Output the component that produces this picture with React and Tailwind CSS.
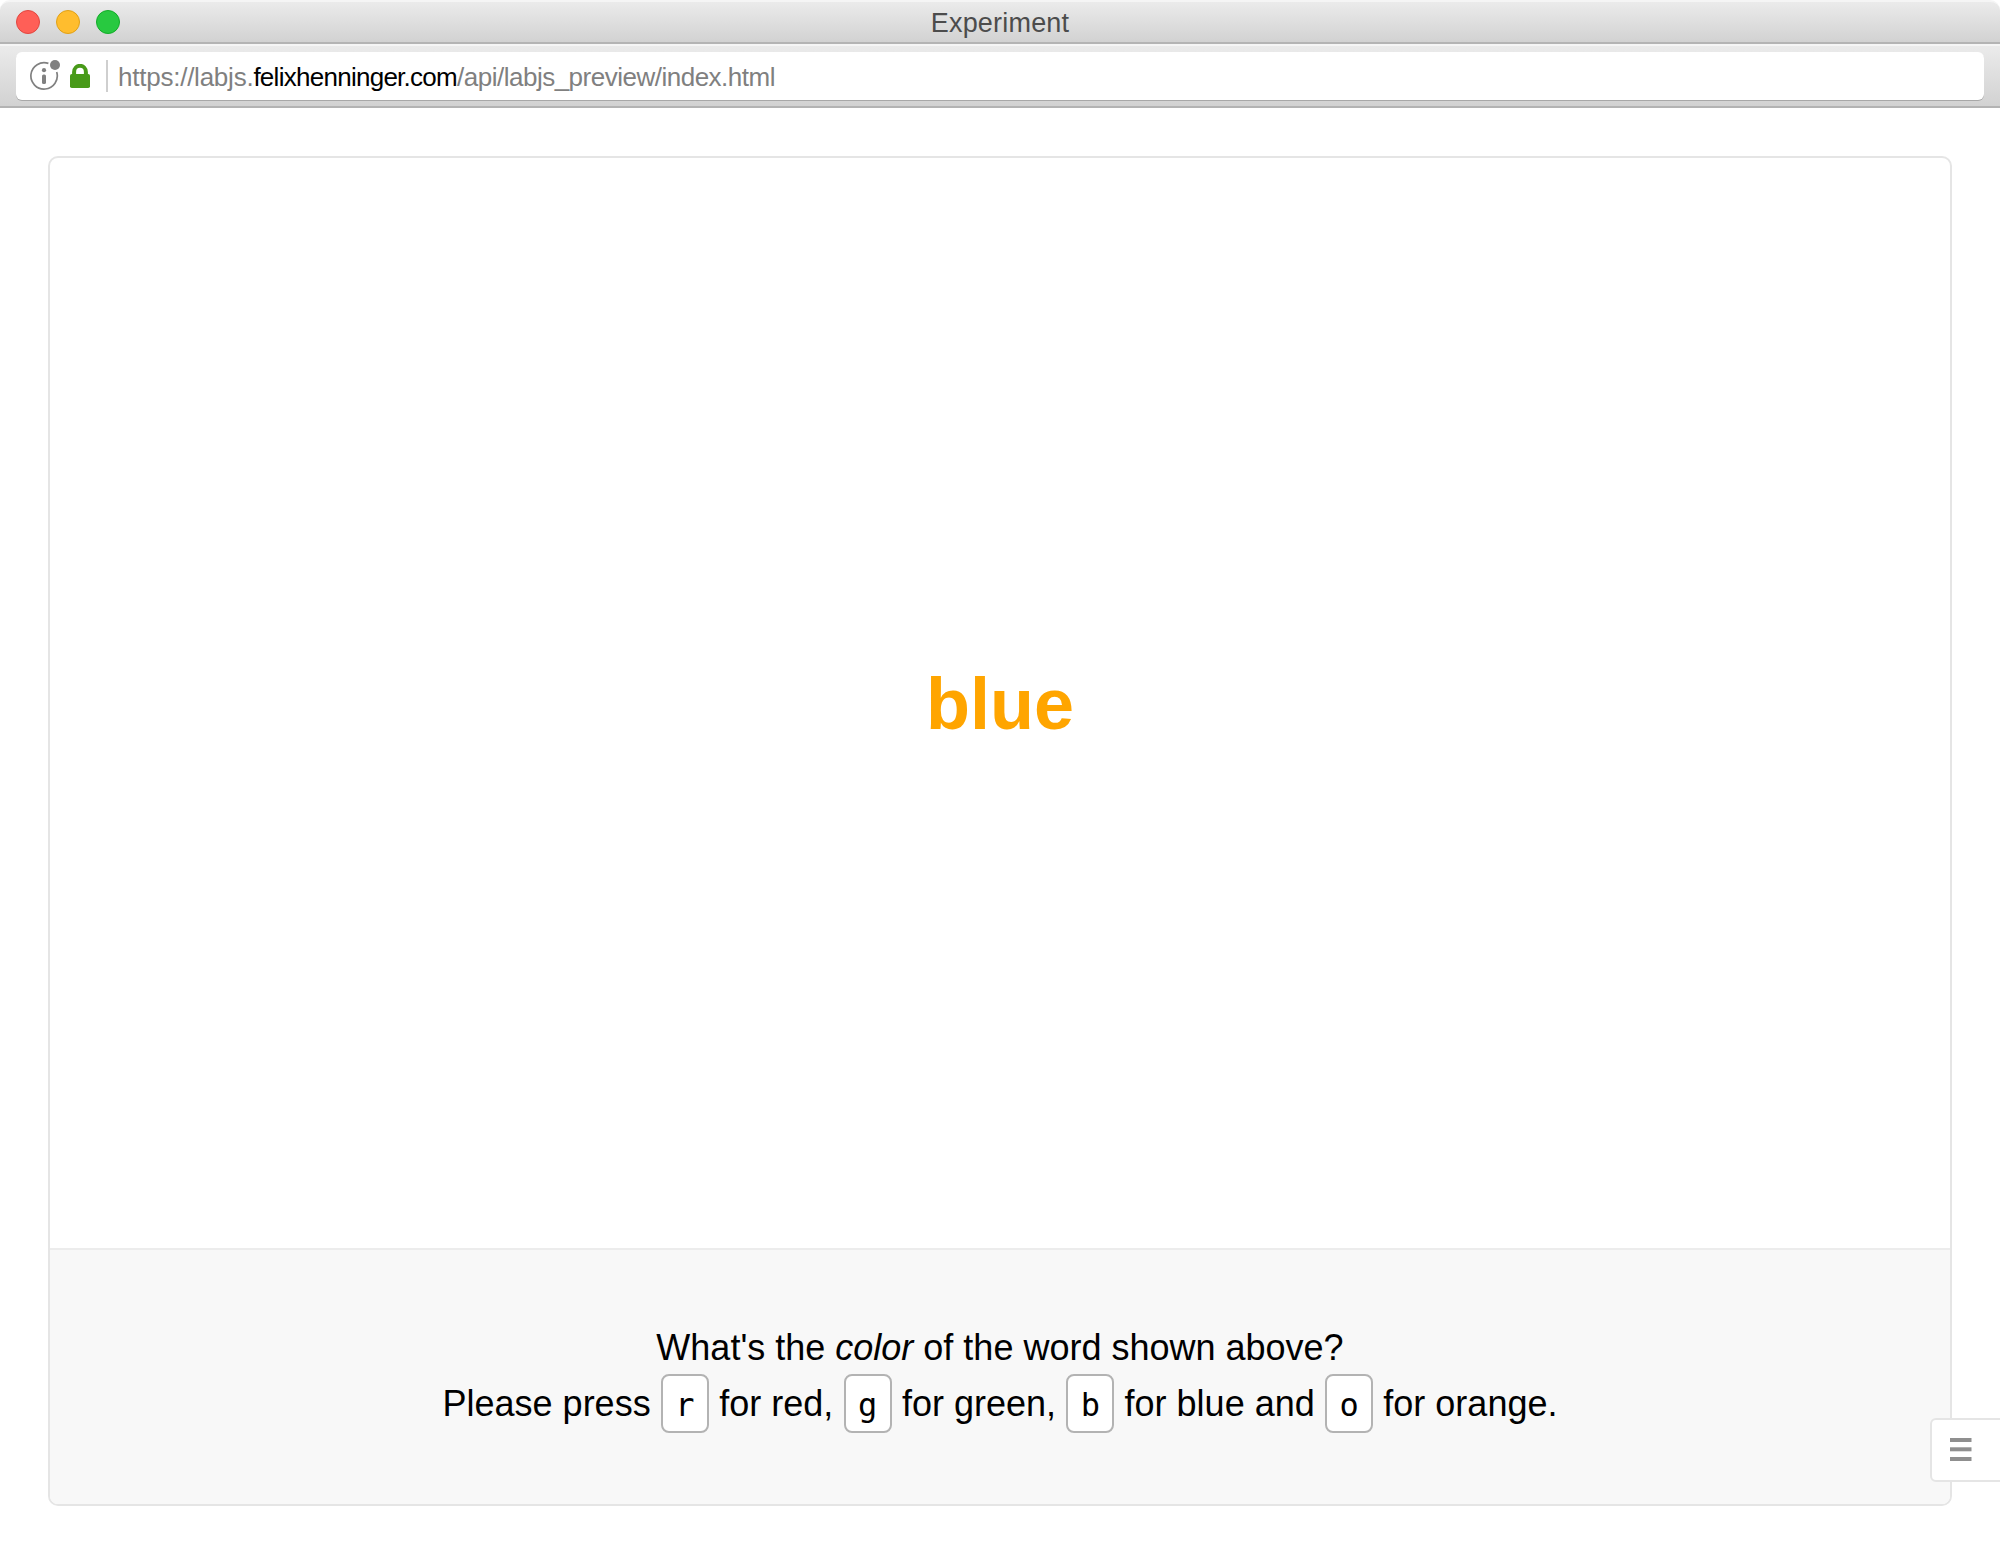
function Kbd({ children }) {
  return (
    <kbd className="mx-[0.3px] inline-block h-[59px] w-[48px] rounded-[8px] border-2 border-[#b3b3b3] bg-white text-center align-baseline font-['DejaVu_Sans_Mono',monospace] text-[32px] leading-[59px]">
      {children}
    </kbd>
  );
}

function TitleBar() {
  return (
    <div className="flex h-[44px] items-center rounded-t-[10px] border-t-2 border-b-2 border-t-[#f5f5f5] border-b-[#b4b4b4] bg-linear-to-b from-[#ebebeb] to-[#d2d2d2] px-4">
      <div className="flex flex-1 items-center gap-4">
        <span className="size-6 rounded-full border border-[#e2463f] bg-[#ff5f57]" />
        <span className="size-6 rounded-full border border-[#e1a116] bg-[#ffbd2e]" />
        <span className="size-6 rounded-full border border-[#12ac28] bg-[#28c940]" />
      </div>
      <h1 className="pt-[2px] text-[27px] leading-[38px] tracking-[0.2px] text-[#4c4c4c]">Experiment</h1>
      <div className="flex-1" />
    </div>
  );
}

function AddressBar() {
  return (
    <div className="h-[64px] border-t-2 border-b-2 border-t-[#f5f5f5] border-b-[#b3b3b3] bg-linear-to-b from-[#ebebeb] to-[#d2d2d2] px-4 pt-[6px]">
      <div className="flex h-[48px] items-center rounded-[6px] bg-white pl-[14px] shadow-[0_1px_0_#a8a8a8]">
        <svg className="h-[32px] w-[31px] shrink-0" viewBox="0 0 31 32" fill="none">
          <path d="M18.4 3.4A13.2 13.2 0 1 0 26.7 12" stroke="#808080" strokeWidth="1.7" />
          <circle cx="25" cy="5" r="5" fill="#808080" />
          <circle cx="14" cy="10.2" r="2.1" fill="#808080" />
          <rect x="12" y="14.6" width="4" height="9.4" rx="1.6" fill="#808080" />
        </svg>
        <svg className="ml-[9px] h-[24px] w-[20px] shrink-0" viewBox="0 0 20 24" fill="none">
          <path d="M4.1 11V8a5.9 6.2 0 0 1 11.8 0v3" stroke="#489a19" strokeWidth="4" />
          <rect y="10" width="20" height="14" rx="1.8" fill="#489a19" />
        </svg>
        <span className="ml-4 h-8 w-[2px] bg-[#cfcfcf]" />
        <span className="ml-[10px] pt-[2px] text-[26px] leading-[46px] whitespace-nowrap text-[#808080]">
          <span className="tracking-[-0.24px]">https://labjs.</span>
          <span className="tracking-[-0.73px] text-black">felixhenninger.com</span>
          <span className="tracking-[-0.5px]">/api/labjs_preview/index.html</span>
        </span>
      </div>
    </div>
  );
}

export default function App() {
  return (
    <div className="flex h-[1554px] w-[2000px] flex-col overflow-hidden bg-white font-['Liberation_Sans',Arial,sans-serif]">
      <TitleBar />
      <AddressBar />
      <div className="relative flex-1 px-12 pt-12 pb-[48px]">
        <main className="flex h-full flex-col overflow-hidden rounded-[10px] border-2 border-[#e5e5e5]">
          <section className="flex flex-1 items-center justify-center pt-px">
            <h2 className="text-[72px] leading-[84px] font-bold text-[#ffa500]">blue</h2>
          </section>
          <footer className="flex h-[256px] flex-col items-center justify-center border-t-2 border-[#ececec] bg-[#f8f8f8] pb-[2px] text-[36px] leading-[56px] whitespace-nowrap text-black">
            <p className="h-[56px]">
              What's the <em>color</em> of the word shown above?
            </p>
            <p className="-mt-[2px] mb-[2px] h-[56px]">
              Please press <Kbd>r</Kbd> for red, <Kbd>g</Kbd> for green, <Kbd>b</Kbd> for blue and <Kbd>o</Kbd> for orange.
            </p>
          </footer>
        </main>
        <button aria-label="Menu" className="absolute right-[-2px] bottom-[72px] flex h-[64px] w-[72px] items-center rounded-l-[6px] border-2 border-[#e5e5e5] bg-white pb-[2px] pl-[18px]">
          <svg className="h-[24px] w-[22px]" viewBox="0 0 22 24" fill="#8f8f8f">
            <rect y="1" width="21.5" height="4" />
            <rect y="10.3" width="21.5" height="4" />
            <rect y="20" width="21.5" height="4" />
          </svg>
        </button>
      </div>
    </div>
  );
}
